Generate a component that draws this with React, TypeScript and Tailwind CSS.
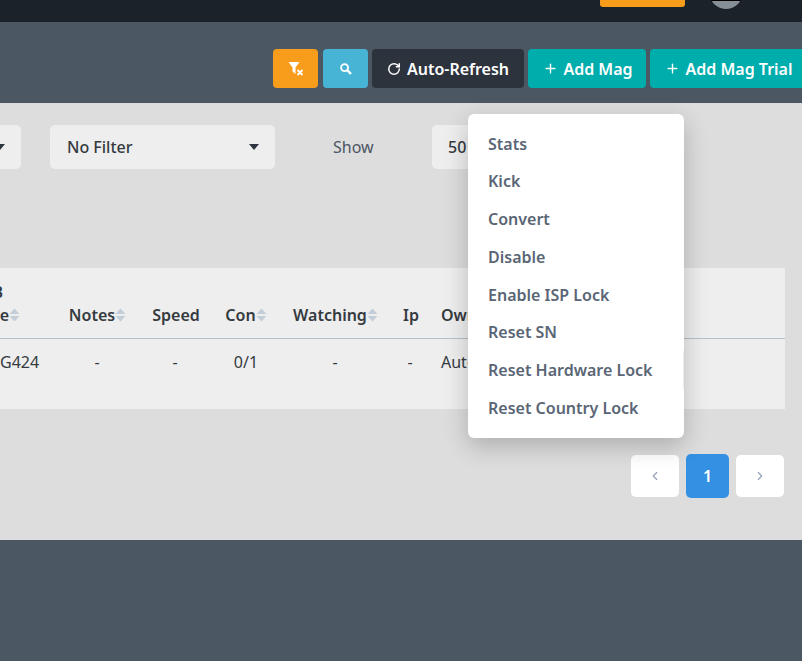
import { ChevronLeft, ChevronRight, Plus, RotateCw } from "lucide-react"

const menuItems = [
  "Stats",
  "Kick",
  "Convert",
  "Disable",
  "Enable ISP Lock",
  "Reset SN",
  "Reset Hardware Lock",
  "Reset Country Lock",
]

function SortIcon() {
  return (
    <svg width="11" height="14" viewBox="0 0 11 14" className="shrink-0">
      <path d="M5.5 0.5 L10.5 6 H0.5 Z" fill="#c3ced9" />
      <path d="M5.5 13.5 L10.5 8 H0.5 Z" fill="#c3ced9" />
    </svg>
  )
}

function Caret() {
  return (
    <svg width="10" height="6" viewBox="0 0 10 6" className="shrink-0">
      <path d="M0 0 H10 L5 6 Z" fill="#2d3540" />
    </svg>
  )
}

function FilterOffIcon() {
  return (
    <svg width="16" height="15" viewBox="0 0 16 15">
      <path d="M0.5 1 H11.5 L7.5 6.5 V13 L4.5 10.5 V6.5 Z" fill="#fff" />
      <path d="M9.5 9 L14.5 14 M14.5 9 L9.5 14" stroke="#fff" strokeWidth="1.8" />
    </svg>
  )
}

function SearchIcon() {
  return (
    <svg width="12" height="12" viewBox="0 0 12 12" fill="none" stroke="#fff">
      <circle cx="4.6" cy="4.6" r="3.5" strokeWidth="1.8" />
      <path d="M7.2 7.2 L11 11" strokeWidth="2.4" />
    </svg>
  )
}

function Th({ label, sort, width }: { label: string; sort?: boolean; width: string }) {
  return (
    <div className={`${width} flex shrink-0 items-center justify-center`}>
      <span>{label}</span>
      {sort && <SortIcon />}
    </div>
  )
}

export default function App() {
  return (
    <div
      className="relative flex h-[661px] w-[802px] flex-col overflow-hidden bg-[#4b5762] text-[16px] text-[#343a40]"
      style={{ fontFamily: '"Noto Sans", "Open Sans", sans-serif' }}
    >
      {/* top nav, mostly scrolled off */}
      <div className="flex h-[22px] shrink-0 items-start justify-end overflow-hidden bg-[#1b222a] pr-[59px]">
        <div className="-ml-px h-[7px] w-[85px] rounded-b-[3px] bg-[#f89c1c]" />
        <div className="relative -mt-[25px] ml-[24px] h-[34px] w-[34px] overflow-hidden rounded-full bg-black">
          <div className="absolute bottom-0 left-[3px] h-[8px] w-[28px] rounded-b-full bg-[#868e96]" />
        </div>
      </div>

      {/* toolbar */}
      <div className="flex h-[81px] shrink-0 items-start justify-end gap-1 pt-[27px] font-semibold text-white">
        <button className="flex h-[39px] w-[45px] items-center justify-center rounded-[4px] bg-[#f89c1c]">
          <FilterOffIcon />
        </button>
        <button className="ml-[1px] flex h-[39px] w-[45px] items-center justify-center rounded-[4px] bg-[#47b4d6]">
          <SearchIcon />
        </button>
        <button className="flex h-[39px] w-[152px] items-center justify-center gap-[6px] rounded-[4px] bg-[#2c333c]">
          <RotateCw size={14} strokeWidth={2.5} />
          Auto-Refresh
        </button>
        <button className="flex h-[39px] w-[118px] items-center justify-center gap-[5px] rounded-[4px] bg-[#00adad] pl-[2px]">
          <Plus size={15} strokeWidth={2.2} />
          Add Mag
        </button>
        <button className="-mr-[4px] flex h-[39px] w-[156px] shrink-0 items-center justify-center gap-[5px] rounded-[4px] bg-[#00adad] pl-[2px]">
          <Plus size={15} strokeWidth={2.2} />
          Add Mag Trial
        </button>
      </div>

      {/* content panel */}
      <div className="flex h-[437px] shrink-0 flex-col bg-[#dddddd] pr-[17px]">
        <div className="mt-[22px] flex h-[44px] items-center">
          <div className="-ml-[204px] flex h-[44px] w-[225px] shrink-0 items-center justify-end rounded-[5px] bg-[#eeeeee] pr-[16px]">
            <Caret />
          </div>
          <div className="ml-[29px] flex h-[44px] w-[225px] shrink-0 items-center justify-between rounded-[5px] bg-[#eeeeee] pl-[17px] pr-[16px] font-[550]">
            No Filter
            <Caret />
          </div>
          <span className="ml-[58px] w-[99px] shrink-0 text-[#4b5563]">Show</span>
          <div className="flex h-[44px] w-[225px] shrink-0 items-center rounded-[5px] bg-[#eeeeee] pl-[16px] font-medium">
            50
          </div>
        </div>

        {/* table */}
        <div className="mt-[99px] flex h-[141px] flex-col bg-[#eeeeee]">
          <div className="flex h-[71px] shrink-0 items-end border-b border-[#b4c0cc] pb-[11px] font-semibold leading-[24px]">
            <div className="w-[56px] shrink-0 overflow-hidden">
              <div className="flex flex-col items-end">
                <span className="-mb-[1px] pr-[53px]">B</span>
                <div className="flex items-center pr-[36px]">
                  <span>e</span>
                  <SortIcon />
                </div>
              </div>
            </div>
            <Th label="Notes" sort width="w-[82px] pl-[1px]" />
            <Th label="Speed" width="w-[74px] pl-[2px]" />
            <Th label="Con" sort width="w-[68px]" />
            <Th label="Watching" sort width="w-[110px] pl-[1px]" />
            <Th label="Ip" width="w-[40px] pl-[2px]" />
            <div className="pl-[11px]">Owner</div>
          </div>
          <div className="flex pt-[11px] leading-[24px]">
            <div className="w-[56px] shrink-0 overflow-hidden pr-[19px] text-right">G424</div>
            <div className="w-[82px] shrink-0 text-center">-</div>
            <div className="w-[74px] shrink-0 text-center">-</div>
            <div className="w-[68px] shrink-0 text-center">0/1</div>
            <div className="w-[110px] shrink-0 text-center">-</div>
            <div className="w-[40px] shrink-0 text-center">-</div>
            <div className="pl-[11px]">Auto</div>
          </div>
        </div>

        {/* pagination */}
        <div className="mt-[45px] flex items-center justify-end gap-[7px] pr-px">
          <button className="flex h-[42px] w-[48px] items-center justify-center rounded-[5px] bg-white text-[#94a3b5]">
            <ChevronLeft size={14} strokeWidth={2} />
          </button>
          <button className="flex h-[44px] w-[43px] items-center justify-center rounded-[5px] bg-[#3490e3] font-semibold text-white">
            1
          </button>
          <button className="flex h-[42px] w-[48px] items-center justify-center rounded-[5px] bg-white text-[#94a3b5]">
            <ChevronRight size={14} strokeWidth={2} />
          </button>
        </div>
      </div>

      {/* row actions dropdown */}
      <div className="absolute left-[468px] top-[114px] w-[216px] rounded-[6px] bg-white pb-[11px] pt-[10.65px] font-semibold text-[#5a6675] shadow-[0_8px_24px_rgba(0,0,0,0.22)]">
        {menuItems.map((item) => (
          <div
            key={item}
            className={`flex h-[37.75px] items-center px-[20px] ${item === "Reset Hardware Lock" ? "border-r border-[#e9eef5]" : ""}`}
          >
            {item}
          </div>
        ))}
      </div>
    </div>
  )
}
